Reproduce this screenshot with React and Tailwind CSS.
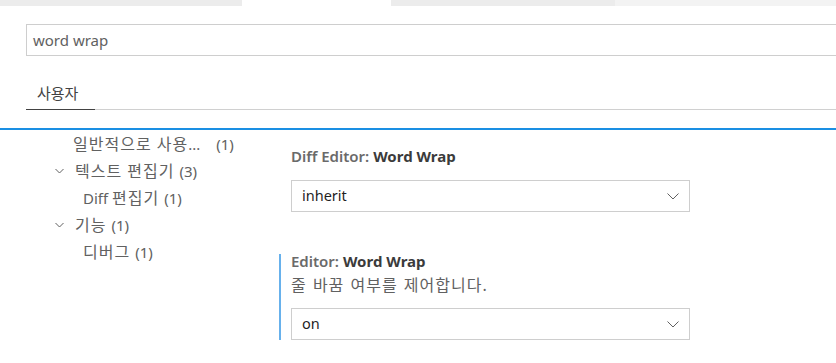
import React from 'react';

const font = { fontFamily: '"Noto Sans", "Noto Sans CJK KR", sans-serif' };

function Chevron({ className }) {
  return (
    <svg width="12" height="8" viewBox="0 0 12 8" className={className}>
      <path d="M0.5 1.5l5.5 5.5 5.5-5.5" fill="none" stroke="currentColor" strokeWidth="1" />
    </svg>
  );
}

function TreeChevron() {
  return (
    <svg width="9" height="6" viewBox="0 0 9 6" className="text-[#616161] mr-[11px]">
      <path d="M0.5 1l4 4 4-4" fill="none" stroke="currentColor" strokeWidth="1" />
    </svg>
  );
}

// Hangul runs wider than the latin text in the reference
function Ko({ children }) {
  return <span className="text-[16px] tracking-[1px]">{children}</span>;
}

function TreeRow({ indent, chevron, children, count, gap }) {
  return (
    <div className="h-[27px] flex items-center text-[15px] text-[#616161] whitespace-pre" style={{ paddingLeft: indent }}>
      {chevron ? <TreeChevron /> : null}
      <span>{children}</span>
      <span className={gap ? 'ml-[16px]' : 'ml-[5px]'}>{count}</span>
    </div>
  );
}

function Select({ value }) {
  return (
    <div className="w-[399px] h-[32px] border border-[#cecece] flex items-center justify-between pl-[10px] pr-[10px] text-[14.5px] text-[#1f1f1f]">
      <span>{value}</span>
      <Chevron className="text-[#616161]" />
    </div>
  );
}

export default function App() {
  return (
    <div className="w-[836px] h-[363px] bg-white overflow-hidden" style={font}>
      <div className="flex h-[6px]">
        <div className="w-[242px] bg-[#ececec]" />
        <div className="w-[149px] bg-white" />
        <div className="w-[224px] bg-[#ececec]" />
        <div className="flex-1 bg-[#f3f3f3]" />
      </div>
      <div className="pl-[26px] pt-[18px]">
        <div className="h-[32px] border border-r-0 border-[#cecece] flex items-center pl-[6px] text-[15px] text-[#616161]">
          word wrap
        </div>
        <div className="mt-[21px] border-b border-[#d0d0d0] flex">
          <div className="relative w-[69px] pl-[11px] h-[32px] flex items-center text-[15px] text-[#424242]">
            사용자
            <div className="absolute left-0 right-0 bottom-[-1px] h-[1.5px] bg-[#424242]" />
          </div>
        </div>
      </div>
      <div className="mt-[18px] h-[1.5px] bg-[#1a8fe3]" />
      <div className="flex">
        <div className="w-[279px] pt-[1px]">
          <TreeRow indent={73} count="(1)" gap><Ko>일반적으로 사용</Ko>...</TreeRow>
          <TreeRow indent={55} chevron count="(3)"><Ko>텍스트 편집기</Ko></TreeRow>
          <TreeRow indent={83} count="(1)">Diff <Ko>편집기</Ko></TreeRow>
          <TreeRow indent={55} chevron count="(1)"><Ko>기능</Ko></TreeRow>
          <TreeRow indent={83} count="(1)"><Ko>디버그</Ko></TreeRow>
        </div>
        <div className="flex-1">
          <div className="pl-[12px] pt-[16px]">
            <div className="text-[15px] leading-[20px] font-semibold text-[#6a6a6a]">
              Diff Editor: <span className="font-bold text-[#3b3b3b]">Word Wrap</span>
            </div>
            <div className="mt-[14px]">
              <Select value="inherit" />
            </div>
          </div>
          <div className="mt-[42px] border-l-2 border-[#67b1ec] pl-[10px]">
            <div className="text-[15px] leading-[14px] font-semibold text-[#6a6a6a]">
              Editor: <span className="font-bold text-[#3b3b3b]">Word Wrap</span>
            </div>
            <div className="text-[16px] leading-[20px] text-[#616161] mt-[7px] tracking-[1px] [word-spacing:1px]">줄 바꿈 여부를 제어합니다.</div>
            <div className="mt-[13px]">
              <Select value="on" />
            </div>
          </div>
        </div>
      </div>
    </div>
  );
}
